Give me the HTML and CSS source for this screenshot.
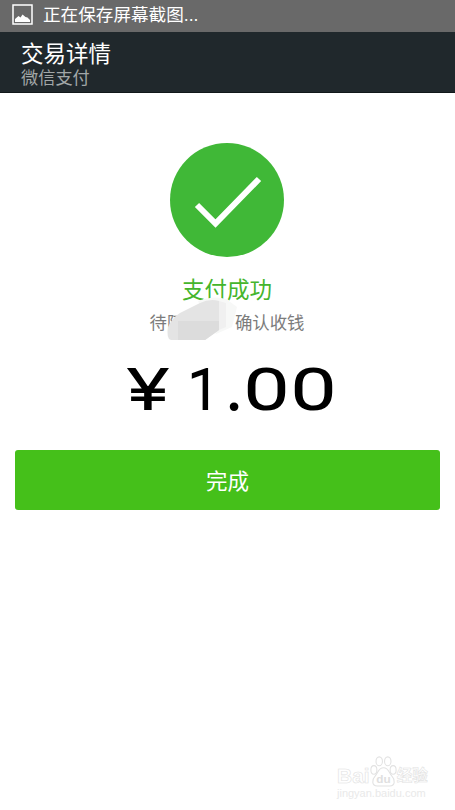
FILE: index.html
```html
<!DOCTYPE html>
<html lang="zh-CN">
<head>
<meta charset="utf-8">
<title>交易详情</title>
<link rel="stylesheet" href="styles.css">
</head>
<body>

<div class="status">
  <svg class="shot" width="21" height="21" viewBox="0 0 21 21">
    <rect x="1" y="1" width="19" height="19" fill="none" stroke="#fff" stroke-width="1.5"/>
    <path d="M3 18v-3l3.500-3 2 1.500 2-3 3 2.500 2 .5 2.500 2.500v2z" fill="#fff"/>
  </svg>
  <span class="status-text">正在保存屏幕截图...</span>
</div>

<div class="header">
  <h1>交易详情</h1>
  <p>微信支付</p>
</div>

<div class="result">
  <svg class="check" width="114" height="114" viewBox="0 0 114 114">
    <circle cx="57" cy="57" r="57" fill="#40b837"/>
    <path d="M27 62l18.5 18.5L89 36" fill="none" stroke="#fff" stroke-width="6"/>
  </svg>
  <h2>支付成功</h2>
  <div class="payee">
    <span>待阿</span>
    <svg class="mask" width="76" height="46" viewBox="0 0 76 46">
      <path d="M32 5Q48-1 60 3L71 11 66 31 50 38z" fill="#f7f8f7"/>
      <path d="M2 31Q6 22 14 17L34 7Q44 2 53 5V34L39 44H5Q0 43 2 31z" fill="#e4e4e4"/>
      <path d="M12 25H53V34L39 44H12z" fill="#dcdcdc"/>
      <path d="M53 5l7 2v24l-7 3z" fill="#f0f0f0"/>
    </svg>
    <span>确认收钱</span>
  </div>
  <div class="amount"><span class="yen">¥</span><span class="one">1</span><span class="dot">.</span><span class="zero">0</span><span class="zero">0</span></div>
  <a class="btn">完成</a>
</div>

<div class="watermark">
  <div class="brand">
    <span>Bai</span>
    <svg width="27" height="31" viewBox="0 0 25 29">
      <g fill="#fff" stroke="#e2e2e2">
        <ellipse cx="3.5" cy="13" rx="2.8" ry="4"/>
        <ellipse cx="8.5" cy="5" rx="3" ry="4.2"/>
        <ellipse cx="16.5" cy="5" rx="3" ry="4.2"/>
        <ellipse cx="21.5" cy="13" rx="2.8" ry="4"/>
        <path d="M12.5 11c5 0 5 5 8 8s3 9-2 9H6.500c-5 0-5-6-2-9s3-8 8-8z"/>
      </g>
      <text x="12.500" y="25" text-anchor="middle" class="du">du</text>
    </svg>
    <span class="jy">经验</span>
  </div>
  <div class="url">jingyan.baidu.com</div>
</div>

</body>
</html>
```

FILE: styles.css
```css
body {
  margin: 0;
  height: 810px;
  display: flex;
  flex-direction: column;
  overflow: hidden;
  background: #fff;
  font-family: "Liberation Sans", "Noto Sans CJK SC", sans-serif;
}
h1, h2, p { margin: 0; font-weight: normal; }

.status {
  display: flex;
  box-sizing: border-box;
  height: 32px;
  padding: 4px 12px 0;
  background: #696969;
  color: #fff;
}
.status-text { margin-left: 10px; font-size: 17.6px; line-height: 22px; }

.header {
  box-sizing: border-box;
  height: 61px;
  padding: 10px 21px 0;
  background: #20282c;
  border-bottom: 1px solid #11181a;
}
.header h1 { font-size: 22.5px; line-height: 26px; color: #fff; }
.header p  { font-size: 17.2px; line-height: 20px; color: #a2a7a8; }

.result {
  display: flex;
  flex-direction: column;
  align-items: center;
  padding: 50px 16px 0 15px;
}
.check { display: block; }
.result h2 { margin-top: 20px; font-size: 22.5px; line-height: 28px; color: #45b52c; }

.payee {
  position: relative;
  display: flex;
  justify-content: space-between;
  width: 155px;
  margin-top: 6px;
  font-size: 17.4px;
  line-height: 25px;
  color: #7c7c7c;
}
.mask { position: absolute; left: 16px; top: -15px; }

.amount {
  display: flex;
  width: 212px;
  height: 60px;
  margin: 24px 0 0 7px;
  font: 300 56px/61px Roboto, sans-serif;
  color: #000;
  -webkit-text-stroke: 2.2px #000;
}
.amount span { display: block; text-align: center; }
.yen  { width: 46px; transform: scaleX(1.35); }
.one  { width: 46px; margin-left: 10px; }
.dot  { width: 16px; -webkit-text-stroke: 4px #000; }
.zero { width: 47px; transform: scaleX(1.4); }

.btn {
  align-self: stretch;
  height: 60px;
  margin: 30px -1px 0 0;
  border-radius: 3px;
  background: #45c01a;
  color: #fff;
  font-size: 21.5px;
  line-height: 64px;
  text-align: center;
}

.watermark { margin: auto 21px 10px auto; width: 97px; color: #fff; }
.brand {
  display: flex;
  align-items: flex-end;
  height: 32px;
  font-weight: bold;
  font-size: 21px;
  line-height: 22px;
  -webkit-text-stroke: 0.6px #e2e2e2;
}
.jy  { font-size: 15.5px; }
.du  { font-size: 11px; fill: #e0e0e0; -webkit-text-stroke: 0; }
.url { font-size: 11px; line-height: 13px; color: #e9e9e9; }
```
